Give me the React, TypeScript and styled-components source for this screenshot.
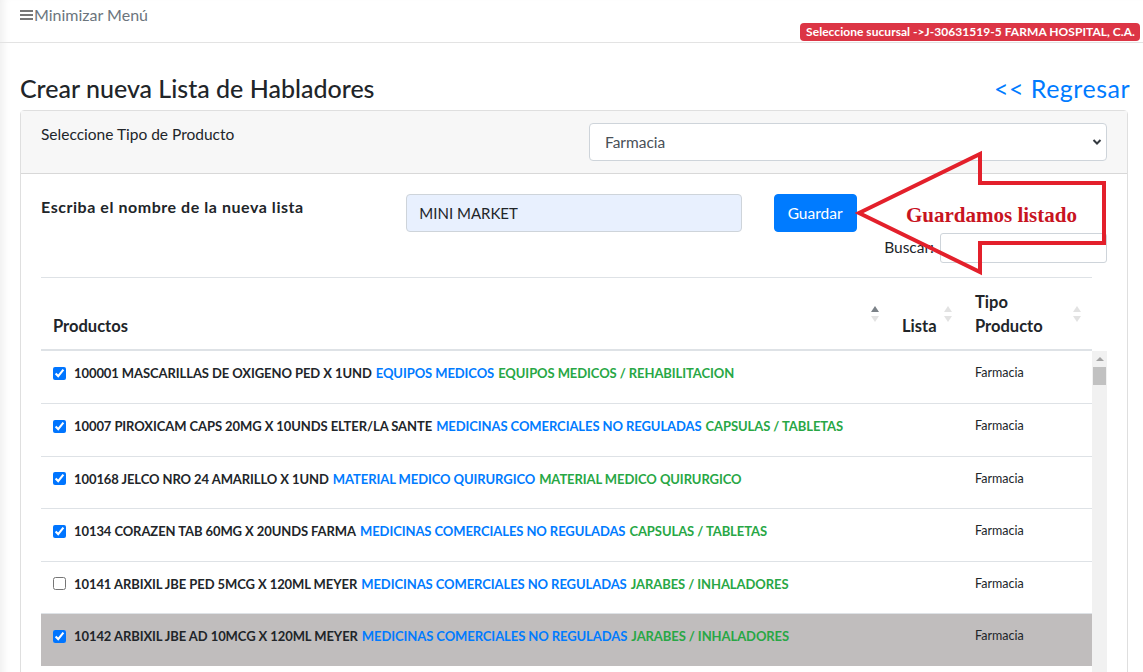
import React from "react";
import styled, { createGlobalStyle } from "styled-components";

const SANS = `Lato, "Noto Sans", "Liberation Sans", sans-serif`;

const GlobalStyle = createGlobalStyle`
  * { box-sizing: border-box; }
  html, body { margin: 0; padding: 0; overflow: hidden; background: #fff; }
  body { font-family: ${SANS}; color: #212529; font-size: 15px; line-height: 1.5; }
`;

const Page = styled.div`
  min-height: 100vh;
  box-shadow: inset 9px 0 8px -6px rgba(0, 0, 0, 0.07);
`;

const TopBar = styled.header`
  height: 43px;
  border-bottom: 1px solid #e3e3e3;
  display: flex;
  justify-content: space-between;
  padding: 0 3px 0 20px;
`;

const MenuToggle = styled.a`
  display: flex;
  align-items: center;
  height: 30px;
  color: #6c757d;
  font-size: 16px;
  cursor: pointer;
`;

const BranchBadge = styled.span`
  align-self: flex-end;
  margin-bottom: 1px;
  height: 18px;
  line-height: 18px;
  padding: 0 5px 0 6px;
  border-radius: 4px;
  background: #dc3545;
  color: #fff;
  font-size: 12px;
  letter-spacing: 0.04px;
  font-weight: 700;
  white-space: nowrap;
`;

const Content = styled.main`
  padding: 30px 15px 0 20px;
`;

const TitleRow = styled.div`
  display: flex;
  justify-content: space-between;
  align-items: center;
  height: 29px;
  margin-bottom: 8px;
`;

const Title = styled.h3`
  margin: 0;
  font-size: 25px;
  font-weight: 500;
  line-height: 1.2;
  color: #212529;
`;

const BackLink = styled.a`
  font-size: 25px;
  letter-spacing: 0.5px;
  color: #007bff;
  margin-right: -2px;
  line-height: 1.2;
  cursor: pointer;
`;

const Card = styled.section`
  border: 1px solid rgba(0, 0, 0, 0.125);
  border-radius: 4px;
`;

const CardHeader = styled.div`
  background: #f7f7f7;
  border-bottom: 1px solid rgba(0, 0, 0, 0.125);
  padding: 12px 20px;
  display: grid;
  grid-template-columns: 1fr 1fr;
  column-gap: 30px;
`;

const HeaderLabel = styled.label`
  font-size: 15.5px;
  line-height: 22.5px;
`;

const SelectWrap = styled.div`
  position: relative;
`;

const TypeSelect = styled.select`
  appearance: none;
  width: 100%;
  height: 38px;
  padding: 6px 30px 6px 15px;
  font-family: ${SANS};
  font-size: 15.5px;
  color: #495057;
  background: #fff;
  border: 1px solid #ced4da;
  border-radius: 4px;
`;

const Chevron = styled.svg`
  position: absolute;
  right: 5px;
  top: 15px;
  pointer-events: none;
`;

const CardBody = styled.div`
  position: relative;
  padding: 20px;
`;

const FormRow = styled.div`
  display: grid;
  grid-template-columns: 1fr 1fr 1fr;
  column-gap: 30px;
`;

const BoldLabel = styled.label`
  font-weight: 700;
  font-size: 16px;
  letter-spacing: 0.55px;
  padding-top: 2px;
  line-height: 22.5px;
  white-space: nowrap;
`;

const NameInput = styled.input`
  width: 100%;
  height: 38px;
  padding: 6px 12px;
  font-family: ${SANS};
  font-size: 15px;
  color: #212529;
  background: #e8f0fe;
  border: 1px solid #ced4da;
  border-radius: 4px;
`;

const SaveButton = styled.button`
  justify-self: start;
  margin-left: 2px;
  height: 38px;
  padding: 0 13px;
  font-family: ${SANS};
  font-size: 15.5px;
  color: #fff;
  background: #007bff;
  border: 1px solid #007bff;
  border-radius: 4px;
`;

const FilterRow = styled.div`
  display: flex;
  justify-content: flex-end;
  align-items: center;
  gap: 6px;
  height: 31px;
  margin-bottom: 14px;
  font-size: 15.5px;
`;

const SearchInput = styled.input`
  width: 167px;
  height: 30px;
  border: 1px solid #ced4da;
  border-radius: 3px;
`;

const Callout = styled.div`
  position: absolute;
  left: 834px;
  top: -25px;
  width: 254px;
  height: 128px;
  pointer-events: none;
`;

const CalloutText = styled.span`
  position: absolute;
  left: 51px;
  top: 51px;
  font-family: "Liberation Serif", "DejaVu Serif", serif;
  font-weight: 700;
  font-size: 21px;
  line-height: 30px;
  color: #c8141f;
  white-space: nowrap;
`;

const HeadBox = styled.div`
  padding-right: 15px;
`;

const Table = styled.table`
  width: 100%;
  border-collapse: collapse;
  table-layout: fixed;
`;

const Th = styled.th`
  position: relative;
  padding: 12px 28px 11px 12px;
  border-top: 1px solid #dee2e6;
  border-bottom: 2px solid #dee2e6;
  text-align: left;
  vertical-align: bottom;
  font-size: 16.5px;
  font-weight: 700;
  line-height: 24px;
  color: #212529;
`;

const Sort = styled.span<{ $active?: boolean }>`
  position: absolute;
  right: 11px;
  top: 50%;
  transform: translateY(-50%);
  display: flex;
  flex-direction: column;
  gap: 4px;
  &::before,
  &::after {
    content: "";
    width: 0;
    height: 0;
    border-left: 4px solid transparent;
    border-right: 4px solid transparent;
  }
  &::before {
    border-bottom: 6px solid ${(p) => (p.$active ? "#7b8288" : "#e2e2e2")};
  }
  &::after {
    border-top: 6px solid #e2e2e2;
  }
`;

const BodyFrame = styled.div`
  display: flex;
`;

const BodyViewport = styled.div`
  flex: 1;
  height: 340px;
  overflow: hidden;
`;

const ScrollRail = styled.div`
  flex: none;
  width: 15px;
  height: 340px;
  background: #f1f1f1;
  display: flex;
  flex-direction: column;
  align-items: center;
`;

const RailArrow = styled.div`
  flex: none;
  height: 16px;
  width: 15px;
  display: flex;
  justify-content: center;
  align-items: center;
  &::before {
    content: "";
    border-left: 4px solid transparent;
    border-right: 4px solid transparent;
    border-bottom: 4px solid #a3a3a3;
  }
`;

const RailThumb = styled.div`
  flex: none;
  width: 13px;
  background: #c1c1c1;
`;

const Tr = styled.tr<{ $selected?: boolean }>`
  background: ${(p) => (p.$selected ? "#c0bdbd" : "transparent")};
  &:not(:first-child) td {
    border-top: 1px solid #dee2e6;
  }
`;

const Td = styled.td`
  height: 52.5px;
  padding: 11px 12px 0;
  vertical-align: top;
  line-height: 22.5px;
  font-size: 13px;
`;

const ProductCell = styled.label`
  display: flex;
  align-items: center;
  height: 22.5px;
  font-size: 13px;
  font-weight: 700;
  letter-spacing: -0.08px;
  color: #212529;
  white-space: nowrap;
`;

const Check = styled.input`
  width: 13px;
  height: 13px;
  margin: 0 8px 0 0;
  flex: none;
`;

const Category = styled.span<{ $tone: "blue" | "green" }>`
  margin-left: 4px;
  color: ${(p) => (p.$tone === "blue" ? "#007bff" : "#28a745")};
`;

const TypeCell = styled.span`
  display: block;
  font-size: 12.5px;
  line-height: 22.5px;
  color: #212529;
`;

type Row = { name: string; cat: string; sub: string; checked: boolean; selected?: boolean };

const ROWS: Row[] = [
  { name: "100001 MASCARILLAS DE OXIGENO PED X 1UND", cat: "EQUIPOS MEDICOS", sub: "EQUIPOS MEDICOS / REHABILITACION", checked: true },
  { name: "10007 PIROXICAM CAPS 20MG X 10UNDS ELTER/LA SANTE", cat: "MEDICINAS COMERCIALES NO REGULADAS", sub: "CAPSULAS / TABLETAS", checked: true },
  { name: "100168 JELCO NRO 24 AMARILLO X 1UND", cat: "MATERIAL MEDICO QUIRURGICO", sub: "MATERIAL MEDICO QUIRURGICO", checked: true },
  { name: "10134 CORAZEN TAB 60MG X 20UNDS FARMA", cat: "MEDICINAS COMERCIALES NO REGULADAS", sub: "CAPSULAS / TABLETAS", checked: true },
  { name: "10141 ARBIXIL JBE PED 5MCG X 120ML MEYER", cat: "MEDICINAS COMERCIALES NO REGULADAS", sub: "JARABES / INHALADORES", checked: false },
  { name: "10142 ARBIXIL JBE AD 10MCG X 120ML MEYER", cat: "MEDICINAS COMERCIALES NO REGULADAS", sub: "JARABES / INHALADORES", checked: true, selected: true },
];

const TOTAL_ROWS = 110;
const VIEW_H = 340;
const ARROWS_H = 32;
const thumbH = Math.max(18, Math.round(((VIEW_H - ARROWS_H) * VIEW_H) / (TOTAL_ROWS * 52.5)));

function Cols() {
  return (
    <colgroup>
      <col />
      <col style={{ width: 73 }} />
      <col style={{ width: 129 }} />
    </colgroup>
  );
}

function Bars() {
  return (
    <svg width="14" height="12" viewBox="0 0 14 12" aria-hidden>
      <rect x="0" y="1" width="13" height="2" fill="#777" />
      <rect x="0" y="5" width="13" height="2" fill="#777" />
      <rect x="0" y="9" width="13" height="2" fill="#777" />
    </svg>
  );
}

export default function App() {
  return (
    <Page>
      <GlobalStyle />
      <TopBar>
        <MenuToggle>
          <Bars />
          Minimizar Menú
        </MenuToggle>
        <BranchBadge>Seleccione sucursal -&gt;J-30631519-5 FARMA HOSPITAL, C.A.</BranchBadge>
      </TopBar>
      <Content>
        <TitleRow>
          <Title>Crear nueva Lista de Habladores</Title>
          <BackLink>&lt;&lt; Regresar</BackLink>
        </TitleRow>
        <Card>
          <CardHeader>
            <HeaderLabel>Seleccione Tipo de Producto</HeaderLabel>
            <SelectWrap>
              <TypeSelect defaultValue="Farmacia">
                <option>Farmacia</option>
              </TypeSelect>
              <Chevron width="10" height="8" viewBox="0 0 10 8">
                <polyline points="1.5,2 5,5.5 8.5,2" fill="none" stroke="#343a40" strokeWidth="2" />
              </Chevron>
            </SelectWrap>
          </CardHeader>
          <CardBody>
            <FormRow>
              <BoldLabel>Escriba el nombre de la nueva lista</BoldLabel>
              <NameInput defaultValue="MINI MARKET" />
              <SaveButton>Guardar</SaveButton>
            </FormRow>
            <FilterRow>
              <span>Buscar:</span>
              <SearchInput />
            </FilterRow>
            <HeadBox>
              <Table>
                <Cols />
                <thead>
                  <tr>
                    <Th>
                      Productos
                      <Sort $active />
                    </Th>
                    <Th>
                      Lista
                      <Sort />
                    </Th>
                    <Th>
                      Tipo Producto
                      <Sort />
                    </Th>
                  </tr>
                </thead>
              </Table>
            </HeadBox>
            <BodyFrame>
              <BodyViewport>
                <Table>
                  <Cols />
                  <tbody>
                    {ROWS.map((r, i) => (
                      <Tr key={i} $selected={r.selected}>
                        <Td>
                          <ProductCell>
                            <Check type="checkbox" defaultChecked={r.checked} />
                            {r.name}
                            <Category $tone="blue">{r.cat}</Category>
                            <Category $tone="green">{r.sub}</Category>
                          </ProductCell>
                        </Td>
                        <Td />
                        <Td>
                          <TypeCell>Farmacia</TypeCell>
                        </Td>
                      </Tr>
                    ))}
                  </tbody>
                </Table>
              </BodyViewport>
              <ScrollRail aria-hidden>
                <RailArrow />
                <RailThumb style={{ height: thumbH }} />
              </ScrollRail>
            </BodyFrame>
            <Callout>
              <svg width="254" height="128" viewBox="0 0 254 128">
                <polygon
                  points="4,64 125,5 125,34 249,34 249,94 125,94 125,123"
                  fill="none"
                  stroke="#e3202b"
                  strokeWidth="4"
                  strokeLinejoin="miter"
                />
              </svg>
              <CalloutText>Guardamos listado</CalloutText>
            </Callout>
          </CardBody>
        </Card>
      </Content>
    </Page>
  );
}
